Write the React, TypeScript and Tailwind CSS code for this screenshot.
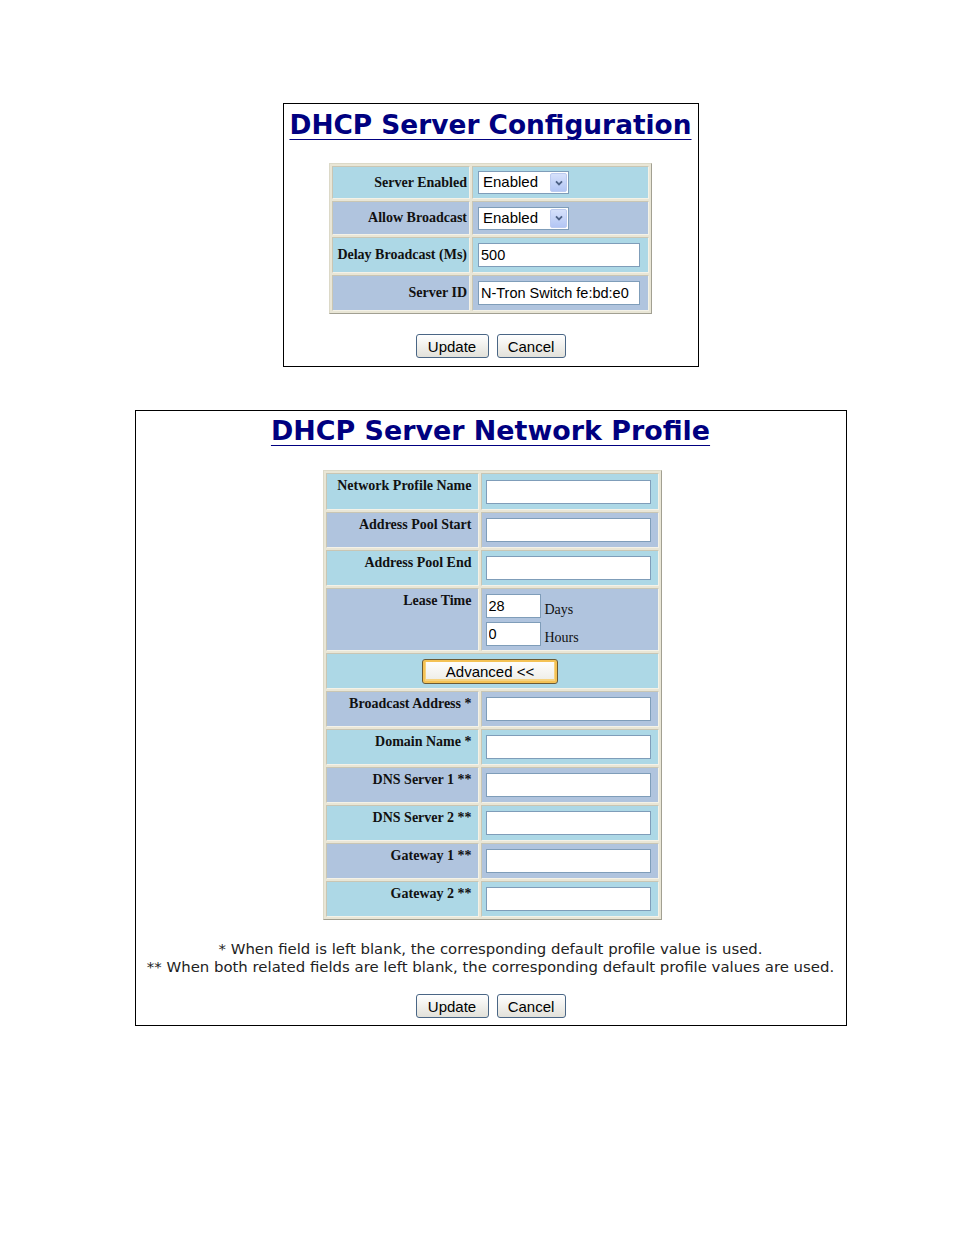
import React from "react";

const light = "bg-[#add8e6]";
const steel = "bg-[#b0c4de]";

const cellEdge =
  "border border-t-[#c9c6b4] border-l-[#c9c6b4] border-b-[#f4f2e8] border-r-[#f4f2e8]";

const labelText =
  "font-['Liberation_Serif',serif] text-[14px] font-bold leading-[16px] text-[#111]";

function Title({ children, size }: { children: React.ReactNode; size: string }) {
  return (
    <h1
      className={`${size} font-['DejaVu_Sans',sans-serif] font-bold leading-[30px] text-[#000080] underline overline decoration-[#000080] decoration-1 underline-offset-[5px]`}
    >
      {children}
    </h1>
  );
}

function TextBox({ width, value = "" }: { width: string; value?: string }) {
  return (
    <input
      defaultValue={value}
      className={`${width} h-[24px] border border-[#7f9db9] bg-white px-[2px] font-['Liberation_Sans',sans-serif] text-[14.5px] text-black outline-none`}
    />
  );
}

function Select() {
  return (
    <div className="flex h-[23px] w-[91px] items-center border border-[#7f9db9] bg-white pl-[4px] pr-[1px] font-['Liberation_Sans',sans-serif] text-[15px] text-black">
      <span className="flex-1">Enabled</span>
      <span className="flex h-[19px] w-[17px] items-center justify-center rounded-[2px] border border-[#bccbf0] bg-linear-to-b from-[#d6e1fb] to-[#b3c6f4]">
        <svg width="8" height="6" viewBox="0 0 8 6">
          <path d="M1 1.3 L4 4.4 L7 1.3" stroke="#4d6185" strokeWidth="1.8" fill="none" />
        </svg>
      </span>
    </div>
  );
}

function Button({ label, width }: { label: string; width: string }) {
  return (
    <button
      type="button"
      className={`${width} h-[24px] rounded-[3px] border border-[#4a6685] bg-linear-to-b from-white to-[#e2e1da] font-['Liberation_Sans',sans-serif] text-[15px] leading-none text-black`}
    >
      {label}
    </button>
  );
}

function Buttons() {
  return (
    <div className="flex gap-[8px]">
      <Button label="Update" width="w-[73px]" />
      <Button label="Cancel" width="w-[69px]" />
    </div>
  );
}

const tableFrame =
  "grid gap-[2px] p-[2px] bg-[#e9e6d6] border border-t-[#dcd9c8] border-l-[#dcd9c8] border-b-[#a2a092] border-r-[#a2a092]";

function ConfigTable() {
  const rows: { label: string; bg: string; h: string; field: React.ReactNode }[] = [
    { label: "Server Enabled", bg: light, h: "h-[33px]", field: <Select /> },
    { label: "Allow Broadcast", bg: steel, h: "h-[34px]", field: <Select /> },
    {
      label: "Delay Broadcast (Ms)",
      bg: light,
      h: "h-[36px]",
      field: <TextBox width="w-[162px]" value="500" />,
    },
    {
      label: "Server ID",
      bg: steel,
      h: "h-[36px]",
      field: <TextBox width="w-[162px]" value="N-Tron Switch fe:bd:e0" />,
    },
  ];
  return (
    <div className={`${tableFrame} grid-cols-[138px_177px]`}>
      {rows.map((r) => (
        <React.Fragment key={r.label}>
          <div className={`${r.bg} ${r.h} ${cellEdge} ${labelText} flex items-center justify-end pr-[2px]`}>
            {r.label}
          </div>
          <div className={`${r.bg} ${r.h} ${cellEdge} flex items-center pl-[5px]`}>{r.field}</div>
        </React.Fragment>
      ))}
    </div>
  );
}

function ProfileRow({ label, bg, h = "h-[36px]" }: { label: string; bg: string; h?: string }) {
  return (
    <>
      <div className={`${bg} ${cellEdge} ${h} ${labelText} pt-[4px] pr-[6px] text-right`}>{label}</div>
      <div className={`${bg} ${cellEdge} ${h} flex items-center pl-[4px]`}>
        <TextBox width="w-[165px]" />
      </div>
    </>
  );
}

function ProfileTable() {
  return (
    <div className={`${tableFrame} grid-cols-[153px_178px]`}>
      <ProfileRow label="Network Profile Name" bg={light} h="h-[37px]" />
      <ProfileRow label="Address Pool Start" bg={steel} />
      <ProfileRow label="Address Pool End" bg={light} />

      <div className={`${steel} ${cellEdge} ${labelText} h-[63px] pt-[4px] pr-[6px] text-right`}>
        Lease Time
      </div>
      <div className={`${steel} ${cellEdge} flex h-[63px] flex-col gap-[4px] pl-[4px] pt-[5px]`}>
        {[
          ["28", "Days"],
          ["0", "Hours"],
        ].map(([v, unit]) => (
          <div key={unit} className="flex items-end gap-[4px]">
            <TextBox width="w-[55px]" value={v} />
            <span className="font-['Liberation_Serif',serif] text-[14px] leading-[16px] text-[#111]">
              {unit}
            </span>
          </div>
        ))}
      </div>

      <div className={`${light} ${cellEdge} col-span-2 flex h-[36px] items-center justify-center pr-[4px]`}>
        <button
          type="button"
          className="h-[25px] w-[136px] rounded-[3px] border border-[#6b5a33] bg-linear-to-b from-white to-[#ecebe4] font-['Liberation_Sans',sans-serif] text-[15px] leading-none text-black shadow-[inset_0_0_0_2px_#f4c255,inset_0_-1px_0_3px_#f7d37f]"
        >
          Advanced &lt;&lt;
        </button>
      </div>

      <ProfileRow label="Broadcast Address *" bg={steel} />
      <ProfileRow label="Domain Name *" bg={light} />
      <ProfileRow label="DNS Server 1 **" bg={steel} />
      <ProfileRow label="DNS Server 2 **" bg={light} />
      <ProfileRow label="Gateway 1 **" bg={steel} />
      <ProfileRow label="Gateway 2 **" bg={light} />
    </div>
  );
}

export default function App() {
  return (
    <div className="flex min-h-[1235px] w-[954px] flex-col items-center bg-white pl-[27px] pt-[103px]">
      <section className="flex w-[416px] flex-col items-center border border-black pb-[8px] pt-[6px]">
        <Title size="text-[26.4px]">DHCP Server Configuration</Title>
        <div className="mt-[23px]">
          <ConfigTable />
        </div>
        <div className="mt-[20px]">
          <Buttons />
        </div>
      </section>

      <section className="mt-[43px] flex w-[712px] flex-col items-center border border-black pb-[7px] pt-[5px]">
        <Title size="text-[26.9px]">DHCP Server Network Profile</Title>
        <div className="ml-[3px] mt-[24px]">
          <ProfileTable />
        </div>
        <div className="mt-[20px] text-center font-['DejaVu_Sans',sans-serif] text-[14.9px] leading-[18px] text-[#222]">
          <p>* When field is left blank, the corresponding default profile value is used.</p>
          <p>** When both related fields are left blank, the corresponding default profile values are used.</p>
        </div>
        <div className="mt-[18px]">
          <Buttons />
        </div>
      </section>
    </div>
  );
}
